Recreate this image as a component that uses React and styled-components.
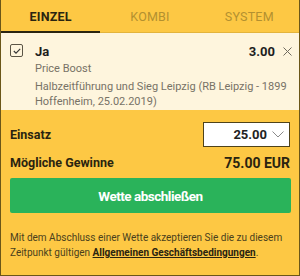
import React, { useState } from 'react'
import styled, { createGlobalStyle } from 'styled-components'

const GlobalStyle = createGlobalStyle`
  html, body {
    margin: 0;
    padding: 0;
    background: #ffffff;
  }
  * {
    box-sizing: border-box;
  }
`

const Slip = styled.div`
  width: 300px;
  height: 276px;
  display: flex;
  flex-direction: column;
  background: #fdc844;
  border: 1px solid #6b5618;
  border-top: none;
  font-family: Roboto, 'Liberation Sans', sans-serif;
  color: #222222;
  overflow: hidden;

  > * {
    flex-shrink: 0;
  }
`

const Tabs = styled.div`
  display: grid;
  grid-template-columns: 1fr 1fr 1fr;
  height: 33px;
  border-bottom: 1px solid #e3b43c;
`

const Tab = styled.div`
  display: flex;
  align-items: center;
  justify-content: center;
  font-size: 12.5px;
  font-weight: ${(p) => (p.active ? 700 : 400)};
  letter-spacing: 0.2px;
  color: ${(p) => (p.active ? '#2a2410' : '#b39030')};
  border-bottom: 2px solid ${(p) => (p.active ? '#2a2410' : 'transparent')};
  margin-bottom: -1px;
  padding-top: 2px;
  cursor: pointer;
`

const Bet = styled.div`
  background: #fef5dd;
  padding: 10px 7px 0 9px;
  height: 77px;
  display: grid;
  grid-template-columns: 14px 1fr;
  column-gap: 11px;
`

const Check = styled.div`
  width: 13px;
  height: 13px;
  margin-top: 1px;
  border: 1px solid #5b5545;
  border-radius: 2px;
  display: flex;
  align-items: center;
  justify-content: center;
`

const BetBody = styled.div`
  display: flex;
  flex-direction: column;
`

const BetHead = styled.div`
  display: flex;
  align-items: center;
  height: 16px;
`

const Pick = styled.span`
  flex: 1;
  font-size: 13px;
  font-weight: 700;
  color: #1d1d1d;
`

const Odds = styled.span`
  font-size: 13px;
  font-weight: 700;
  color: #1d1d1d;
  margin-right: 8px;
`

const Close = styled.span`
  display: flex;
  align-items: center;
  width: 9px;
`

const Boost = styled.div`
  font-size: 11px;
  line-height: 14px;
  color: #777266;
  margin-top: 3px;
`

const Market = styled.div`
  font-size: 11px;
  line-height: 15px;
  color: #777266;
  margin-top: 3px;
`

const Footer = styled.div`
  display: flex;
  flex-direction: column;
  padding: 10px 9px 0 9px;
`

const Row = styled.div`
  display: flex;
  align-items: center;
  justify-content: space-between;
  height: ${(p) => p.h || 'auto'};
`

const Label = styled.span`
  font-size: 12.5px;
  font-weight: 700;
  color: #2a2410;
`

const Amount = styled.span`
  font-size: 14px;
  font-weight: 700;
  color: #2a2410;
`

const Stake = styled.div`
  width: 87px;
  height: 25px;
  background: #ffffff;
  border: 1px solid #4f431a;
  display: flex;
  align-items: center;
  justify-content: flex-end;
  gap: 5px;
  padding-right: 5px;
  font-size: 13px;
  font-weight: 700;
  color: #222222;
`

const Submit = styled.button`
  margin-top: 1px;
  height: 35px;
  width: 281px;
  border: none;
  border-radius: 2px;
  background: #2ab35a;
  color: #ffffff;
  font-family: Roboto, 'Liberation Sans', sans-serif;
  font-size: 13.5px;
  font-weight: 700;
  letter-spacing: -0.5px;
  cursor: pointer;
`

const Terms = styled.p`
  margin: 18px 0 0 0;
  font-size: 10px;
  line-height: 14.5px;
  color: #4a3f1c;

  a {
    color: #2a2410;
    font-weight: 700;
    text-decoration: underline;
  }
`

const App = () => {
  const [tab, setTab] = useState('EINZEL')

  return (
    <>
      <GlobalStyle />
      <Slip>
        <Tabs>
          {['EINZEL', 'KOMBI', 'SYSTEM'].map((t) => (
            <Tab key={t} active={tab === t} onClick={() => setTab(t)}>
              {t}
            </Tab>
          ))}
        </Tabs>
        <Bet>
          <Check>
            <svg width="8" height="6" viewBox="0 0 8 6">
              <path d="M0.8 3 L3 5.2 L7.2 0.8" fill="none" stroke="#333" strokeWidth="1.1" />
            </svg>
          </Check>
          <BetBody>
            <BetHead>
              <Pick>Ja</Pick>
              <Odds>3.00</Odds>
              <Close>
                <svg width="9" height="9" viewBox="0 0 9 9">
                  <path d="M0.5 0.5 L8.5 8.5 M8.5 0.5 L0.5 8.5" stroke="#6f6a5e" strokeWidth="1" />
                </svg>
              </Close>
            </BetHead>
            <Boost>Price Boost</Boost>
            <Market>
              Halbzeitführung und Sieg Leipzig (RB Leipzig - 1899 Hoffenheim, 25.02.2019)
            </Market>
          </BetBody>
        </Bet>
        <Footer>
          <Row h="28px">
            <Label>Einsatz</Label>
            <Stake>
              25.00
              <svg width="12" height="7" viewBox="0 0 12 7">
                <path d="M0.5 0.5 L6 6 L11.5 0.5" fill="none" stroke="#8a8a8a" strokeWidth="1" />
              </svg>
            </Stake>
          </Row>
          <Row h="29px">
            <Label>Mögliche Gewinne</Label>
            <Amount>75.00 EUR</Amount>
          </Row>
          <Submit>Wette abschließen</Submit>
          <Terms>
            Mit dem Abschluss einer Wette akzeptieren Sie die zu diesem Zeitpunkt gültigen{' '}
            <a>Allgemeinen Geschäftsbedingungen</a>.
          </Terms>
        </Footer>
      </Slip>
    </>
  )
}

export default App
